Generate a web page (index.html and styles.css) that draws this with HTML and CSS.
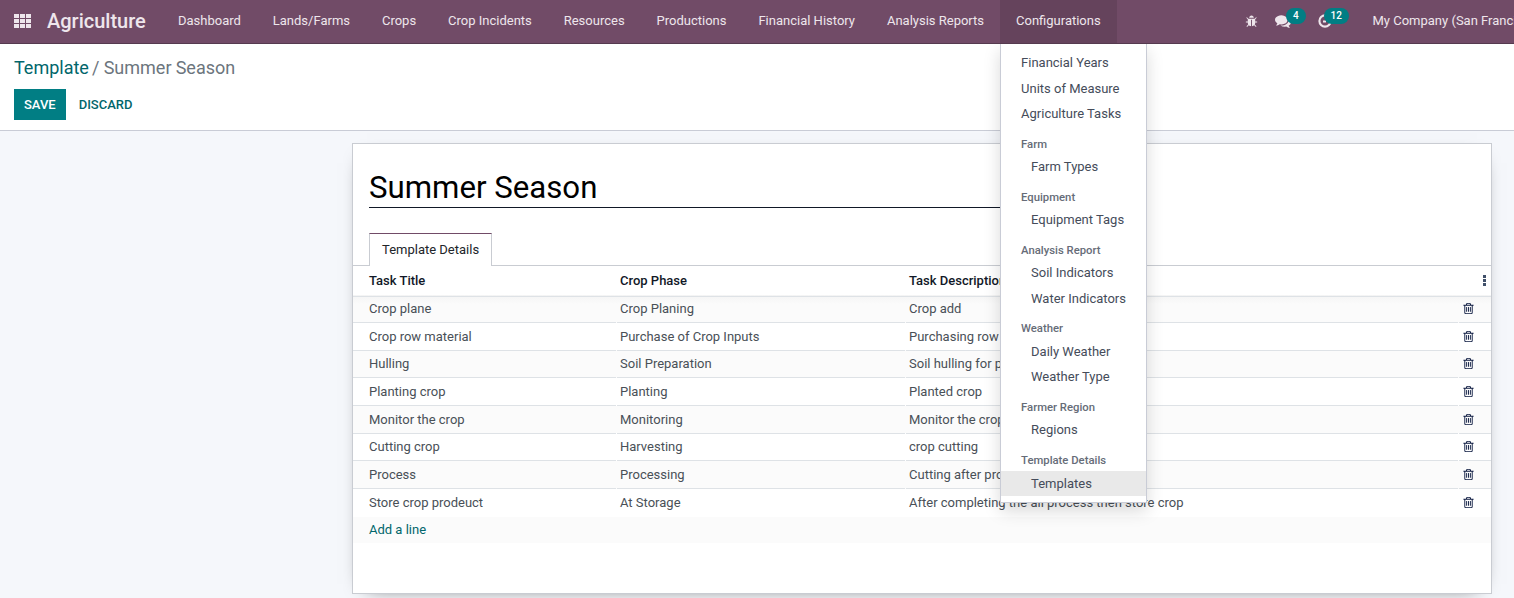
FILE: index.html
```html
<!DOCTYPE html>
<html lang="en">
<head>
<meta charset="utf-8">
<title>Agriculture - Summer Season</title>
<link rel="stylesheet" href="styles.css">
</head>
<body>
<svg class="sprite" aria-hidden="true">
  <symbol id="trash" viewBox="0 0 1792 1792"><path d="M704 736v576q0 14-9 23t-23 9h-64q-14 0-23-9t-9-23v-576q0-14 9-23t23-9h64q14 0 23 9t9 23zm256 0v576q0 14-9 23t-23 9h-64q-14 0-23-9t-9-23v-576q0-14 9-23t23-9h64q14 0 23 9t9 23zm256 0v576q0 14-9 23t-23 9h-64q-14 0-23-9t-9-23v-576q0-14 9-23t23-9h64q14 0 23 9t9 23zm128 724v-948h-896v948q0 22 7 40.5t14.5 27 10.5 8.5h832q3 0 10.5-8.5t14.5-27 7-40.5zm-672-1076h448l-48-117q-7-9-17-11h-317q-10 2-17 11zm928 32v64q0 14-9 23t-23 9h-96v948q0 83-47 143.5t-113 60.5h-832q-66 0-113-58.5t-47-141.5v-952h-96q-14 0-23-9t-9-23v-64q0-14 9-23t23-9h309l70-167q15-37 54-63t79-26h320q40 0 79 26t54 63l70 167h309q14 0 23 9t9 23z"/></symbol>
</svg>
<header class="navbar">
  <svg class="apps" viewBox="0 0 17 14"><path d="M0 0h5v4H0zM6 0h5v4H6zM12 0h5v4h-5zM0 5h5v4H0zM6 5h5v4H6zM12 5h5v4h-5zM0 10h5v4H0zM6 10h5v4H6zM12 10h5v4h-5z"/></svg>
  <span class="brand">Agriculture</span>
  <nav class="menu">
    <a>Dashboard</a><a>Lands/Farms</a><a>Crops</a><a>Crop Incidents</a><a>Resources</a><a>Productions</a><a>Financial History</a><a>Analysis Reports</a>
    <div class="open">
      <a>Configurations</a>
      <div class="dropdown">
        <a>Financial Years</a><a>Units of Measure</a><a>Agriculture Tasks</a>
        <h6>Farm</h6><a class="sub">Farm Types</a>
        <h6>Equipment</h6><a class="sub">Equipment Tags</a>
        <h6>Analysis Report</h6><a class="sub">Soil Indicators</a><a class="sub">Water Indicators</a>
        <h6>Weather</h6><a class="sub">Daily Weather</a><a class="sub">Weather Type</a>
        <h6>Farmer Region</h6><a class="sub">Regions</a>
        <h6>Template Details</h6><a class="sub hover">Templates</a>
      </div>
    </div>
  </nav>
  <div class="systray">
    <svg class="bug" viewBox="0 0 1792 1792"><path d="M1696 960q0 26-19 45t-45 19h-224q0 171-67 290l208 209q19 19 19 45t-19 45q-18 19-45 19t-45-19l-198-197q-5 5-15 13t-42 28.5-65 36.5-82 29-97 13v-896h-128v896q-51 0-101.5-13.5t-87-33-66-39-43.5-32.5l-15-14-183 207q-20 21-48 21-24 0-43-16-19-18-20.5-44.5t15.5-46.5l202-227q-58-114-58-274h-224q-26 0-45-19t-19-45 19-45 45-19h224v-294l-173-173q-19-19-19-45t19-45 45-19 45 19l173 173h844l173-173q19-19 45-19t45 19 19 45-19 45l-173 173v294h224q26 0 45 19t19 45zm-480-576h-640q0-133 93.5-226.5t226.5-93.5 226.5 93.5 93.5 226.5z"/></svg>
    <span class="tray chat"><svg viewBox="0 0 1792 1792"><path d="M1408 768q0 139-94 257t-256.5 186.5-353.5 68.5q-86 0-176-16-124 88-278 128-36 9-86 16h-3q-11 0-20.5-8t-11.5-21q-1-3-1-6.5t.5-6.5 2-6l2.5-5 3.5-5.5 4-5 4.5-5 4-4.5q5-6 23-25t26-29.5 22.5-29 25-38.5 20.5-44q-124-72-195-177t-71-224q0-139 94-257t256.5-186.5 353.5-68.5 353.5 68.5 256.5 186.5 94 257zm384 256q0 120-71 224.5t-195 176.5q10 24 20.5 44t25 38.5 22.5 29 26 29.5 23 25q1 1 4 4.5t4.5 5 4 5 3.5 5.5l2.5 5 2 6 .5 6.5-1 6.5q-3 14-13 22t-22 7q-50-7-86-16-154-40-278-128-90 16-176 16-271 0-472-132 58 4 88 4 161 0 309-45t264-129q125-92 192-212t67-254q0-77-23-152 129 71 204 178t75 230z"/></svg><b>4</b></span>
    <span class="tray clock"><svg viewBox="0 0 14 14"><path d="M7 1.4a5.6 5.6 0 1 0 0 11.2A5.6 5.6 0 0 0 7 1.4M5 7.5H8" fill="none" stroke="#eee6ec" stroke-width="2.1"/></svg><b>12</b></span>
    <span class="company">My Company (San Francisco)</span>
  </div>
</header>
<section class="control">
  <div class="crumbs"><a>Template</a><span> / Summer Season</span></div>
  <div class="buttons"><button class="save">SAVE</button><button class="discard">DISCARD</button></div>
</section>
<main class="content">
  <article class="sheet">
    <h1>Summer Season</h1>
    <div class="tabs"><span class="tab">Template Details</span></div>
    <div class="table">
      <div class="row head"><span>Task Title</span><span>Crop Phase</span><span>Task Description</span><span class="kebab"><svg viewBox="0 0 3 11"><path d="M0 0h3v3H0zM0 4h3v3H0zM0 8h3v3H0z"/></svg></span></div>
      <div class="lines">
        <div class="row"><span>Crop plane</span><span>Crop Planing</span><span>Crop add</span><span><svg><use href="#trash"/></svg></span></div>
        <div class="row"><span>Crop row material</span><span>Purchase of Crop Inputs</span><span>Purchasing row material</span><span><svg><use href="#trash"/></svg></span></div>
        <div class="row"><span>Hulling</span><span>Soil Preparation</span><span>Soil hulling for planting</span><span><svg><use href="#trash"/></svg></span></div>
        <div class="row"><span>Planting crop</span><span>Planting</span><span>Planted crop</span><span><svg><use href="#trash"/></svg></span></div>
        <div class="row"><span>Monitor the crop</span><span>Monitoring</span><span>Monitor the crop</span><span><svg><use href="#trash"/></svg></span></div>
        <div class="row"><span>Cutting crop</span><span>Harvesting</span><span>crop cutting</span><span><svg><use href="#trash"/></svg></span></div>
        <div class="row"><span>Process</span><span>Processing</span><span>Cutting after process</span><span><svg><use href="#trash"/></svg></span></div>
        <div class="row"><span>Store crop prodeuct</span><span>At Storage</span><span>After completing the all process then store crop</span><span><svg><use href="#trash"/></svg></span></div>
      </div>
      <div class="add"><a>Add a line</a></div>
    </div>
  </article>
</main>
</body>
</html>
```
FILE: styles.css
```css
* { box-sizing: border-box; }
body { margin: 0; height: 598px; overflow: hidden; display: flex; flex-direction: column; background: #f5f7fb; color: #495057; font: 13px/20px Roboto, sans-serif; }
.sprite { position: absolute; width: 0; height: 0; }

.navbar { height: 44px; flex: none; display: flex; align-items: center; background: #714b67; border-bottom: 1px solid #553a4f; color: #eee6ec; white-space: nowrap; }
.navbar svg { fill: #eee6ec; display: block; flex: none; }
.apps { width: 17px; height: 14px; margin: 0 16px 1px 14px; }
.brand { width: 115px; font-size: 20px; font-weight: 500; line-height: 30px; padding-bottom: 2px; }
.menu { display: flex; height: 43px; line-height: 41px; }
.menu > a, .open > a { padding: 0 15.97px; display: block; }
.open { position: relative; background: #65435c; height: 43px; width: 117px; }
.dropdown { position: absolute; z-index: 5; left: 0; top: 43px; width: 147px; height: 460px; padding-top: 7px; background: #fff; border: 1px solid #c9ccd6; border-top: 0; box-shadow: 0 8px 16px rgba(0, 0, 0, .15); color: #454c5a; clip-path: inset(1px -30px -30px -30px); }
.dropdown a { display: block; height: 25.5px; line-height: 25px; padding-left: 20px; }
.dropdown .sub { padding-left: 30px; }
.dropdown .hover { margin-top: .6px; height: 25.5px; line-height: 26px; background: #e9e9e9; }
.dropdown h6 { margin: 0; height: 27.55px; padding: 8px 0 0 20px; font-size: 11.3px; font-weight: 500; line-height: 19px; color: #666c78; }

.systray { display: flex; align-items: center; height: 43px; margin-left: auto; width: 270px; flex: none; overflow: hidden; }
.bug { width: 13px; height: 13px; margin-left: 1px; }
.tray { position: relative; }
.chat { margin-left: 17px; }
.chat svg { width: 16px; height: 16px; margin: -1px -1px 0 0; }
.clock { margin-left: 27.5px; }
.clock svg { width: 14px; height: 14px; margin-top: -1px; }
.tray b { position: absolute; left: 11px; top: -6px; height: 16px; padding: 0 7px; border-radius: 8px; background: #017e84; color: #fff; font-size: 10px; font-weight: 500; line-height: 16px; }
.clock b { left: 6px; top: -7px; }
.company { margin: 0 0 2px 41px; }

.control { height: 87px; flex: none; padding: 12px 14px 0; background: #fff; border-bottom: 1px solid #c9ccd6; }
.crumbs { font-size: 18px; line-height: 24px; color: #6c757d; }
.crumbs span { margin-left: -1px; word-spacing: -.3px; }
.crumbs a, .add a { color: #01666b; }
.buttons { display: flex; margin-top: 9px; }
.buttons button { height: 31px; border: 0; padding: 0 10px; font: 500 13px/31px Roboto, sans-serif; }
.save { background: #017e84; color: #fff; }
.discard { background: none; color: #01666b; margin-left: 3px; }

.content { flex: 1; padding: 12px 22px 4px 352px; }
.sheet { height: 451px; background: #fff; border: 1px solid #c9ccd2; box-shadow: 0 5px 20px -15px #000; padding-top: 22px; }
.sheet h1 { margin: 0 16px; width: 700px; height: 42px; border-bottom: 1px solid #111827; color: #000; font-size: 31.2px; font-weight: 400; line-height: 43px; }
.tabs { margin-top: 25px; height: 33px; padding-left: 16px; border-bottom: 1px solid #c9ccd2; }
.tab { display: block; width: 123px; height: 33px; padding-left: 12px; line-height: 32px; background: #fff; color: #212529; border: 1px solid #c9ccd2; border-top-color: #714b67; border-bottom: 0; }
.row { display: grid; grid-template-columns: 264px 289px 553px 1fr; height: 27.7px; line-height: 27px; }
.row > span { padding-left: 3px; border-bottom: 1px solid #dee2e6; margin-right: 1px; white-space: nowrap; }
.row > span:first-child { padding-left: 16px; }
.row > span:last-child { margin-right: 0; padding: 6.95px 0 0 2.5px; }
.row svg { width: 13px; height: 13px; display: block; fill: #0c1a40; }
.lines .row:nth-child(odd) { background: #fbfbfb; }
.lines .row:last-child > span { border-bottom-color: transparent; }
.lines .row:first-child { height: 27.4px; background: linear-gradient(#f4f4f4, #fbfbfb 9px); }
.head { height: 29.35px; line-height: 30px; color: #111827; font-weight: 500; }
.row.head > span { margin-right: 0; }
.row > .kebab:last-child { padding: 9px 0 0 24px; }
.kebab svg { width: 3px; height: 11px; fill: #40506a; }
.add { height: 26.5px; padding-left: 16px; line-height: 26px; background: #fbfbfb; }
```
